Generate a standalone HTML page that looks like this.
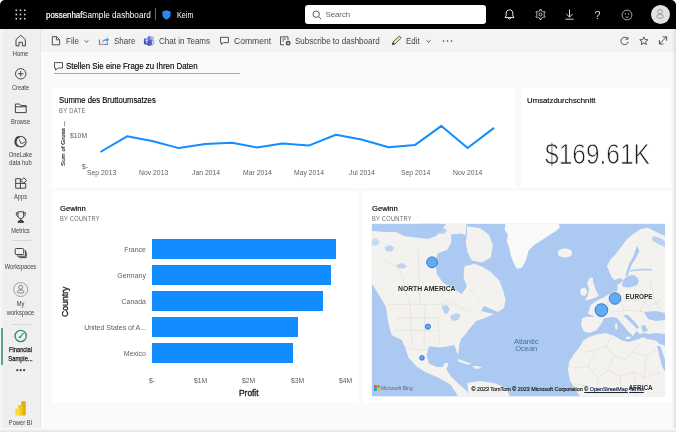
<!DOCTYPE html>
<html><head><meta charset="utf-8">
<style>
*{box-sizing:border-box;margin:0;padding:0}
html,body{width:676px;height:432px;overflow:hidden;background:#fff;font-family:"Liberation Sans",sans-serif;color:#252423}
#win{position:absolute;left:0;top:0;width:676px;height:432px;border-radius:5px 5px 0 0;overflow:hidden;background:#fafafa;will-change:transform}
#top{position:absolute;left:0;top:0;width:676px;height:29px;background:#000}
#nav{position:absolute;left:0;top:29px;width:41px;height:403px;background:linear-gradient(to right,#f8f8f8 0,#efefef 3.5px,#efefef 39.5px,#e3e3e3 41px)}
#navedge{position:absolute;left:41px;top:52px;width:2.5px;height:380px;background:#fdfdfd}
.abs{position:absolute}
.t{position:absolute;white-space:nowrap;line-height:1}
.card{position:absolute;background:#fff;box-shadow:0 0 2px rgba(0,0,0,0.025)}
.nl{position:absolute;width:41px;left:0;text-align:center;font-size:7px;color:#424242;line-height:8.5px;transform:scaleX(0.82);transform-origin:20.5px 0}
svg{position:absolute;overflow:visible}
.tb{position:absolute;font-size:9px;color:#424242;white-space:nowrap;line-height:1;transform:scaleX(0.89);transform-origin:0 0}
.ax{position:absolute;font-size:7.2px;color:#605e5c;white-space:nowrap;line-height:1;transform:scaleX(0.95);transform-origin:0 0}
.bl{position:absolute;font-size:7px;color:#605e5c;white-space:nowrap;line-height:1;right:530px;text-align:right}
</style></head><body>
<div id="win">
 <!-- TOP BAR -->
 <div id="top">
  <svg style="left:15px;top:9px" width="11" height="11" viewBox="0 0 11 11">
   <g fill="#ddd"><rect x="0.5" y="0.5" width="1.6" height="1.6"/><rect x="4.7" y="0.5" width="1.6" height="1.6"/><rect x="8.9" y="0.5" width="1.6" height="1.6"/>
   <rect x="0.5" y="4.7" width="1.6" height="1.6"/><rect x="4.7" y="4.7" width="1.6" height="1.6"/><rect x="8.9" y="4.7" width="1.6" height="1.6"/>
   <rect x="0.5" y="8.9" width="1.6" height="1.6"/><rect x="4.7" y="8.9" width="1.6" height="1.6"/><rect x="8.9" y="8.9" width="1.6" height="1.6"/></g>
  </svg>
  <div class="t" style="left:46px;top:10.6px;font-size:8.4px;color:#fff;-webkit-text-stroke:0.2px #fff;transform:scaleX(0.94);transform-origin:0 0">possenhaf</div>
  <div class="t" style="left:81.5px;top:10.5px;font-size:9px;color:#fff;transform:scaleX(0.91);transform-origin:0 0">Sample dashboard</div>
  <div class="abs" style="left:155.2px;top:8.3px;width:1px;height:11.5px;background:#6a6a6a"></div>
  <svg style="left:162px;top:10px" width="9" height="10" viewBox="0 0 9 10"><path d="M4.5 0.3 L8.6 1.6 L8.6 4.6 C8.6 7.2 6.8 8.9 4.5 9.7 C2.2 8.9 0.4 7.2 0.4 4.6 L0.4 1.6 Z" fill="#2b88f0"/></svg>
  <div class="t" style="left:176.7px;top:11px;font-size:8.3px;color:#fff;transform:scaleX(0.87);transform-origin:0 0">Keim</div>
  <div class="abs" style="left:305px;top:5px;width:181px;height:19px;background:#fff;border-radius:3px"></div>
  <svg style="left:312px;top:10px" width="10" height="10" viewBox="0 0 10 10"><circle cx="4.2" cy="4.2" r="3.2" fill="none" stroke="#555" stroke-width="1"/><path d="M6.6 6.6 L9.2 9.2" stroke="#555" stroke-width="1"/></svg>
  <div class="t" style="left:325.5px;top:10.5px;font-size:7.8px;color:#616161">Search</div>
  <!-- bell -->
  <svg style="left:504px;top:9px" width="11" height="11" viewBox="0 0 11 11"><path d="M5.5 0.8 C3.4 0.8 2.2 2.4 2.2 4.3 L2.2 6.8 L1 8.6 L10 8.6 L8.8 6.8 L8.8 4.3 C8.8 2.4 7.6 0.8 5.5 0.8 Z" fill="none" stroke="#eee" stroke-width="1"/><path d="M4.2 9.4 Q5.5 10.8 6.8 9.4" fill="none" stroke="#eee" stroke-width="1"/></svg>
  <!-- gear -->
  <svg style="left:535px;top:9px" width="11" height="11" viewBox="0 0 11 11"><path d="M3.65 2.30 L4.66 1.90 L4.87 0.54 L6.13 0.54 L6.34 1.90 L7.35 2.30 L8.20 2.97 L9.48 2.48 L10.11 3.56 L9.04 4.43 L9.20 5.50 L9.04 6.57 L10.11 7.44 L9.48 8.52 L8.20 8.03 L7.35 8.70 L6.34 9.10 L6.13 10.46 L4.87 10.46 L4.66 9.10 L3.65 8.70 L2.80 8.03 L1.52 8.52 L0.89 7.44 L1.96 6.57 L1.80 5.50 L1.96 4.43 L0.89 3.56 L1.52 2.48 L2.80 2.97 Z" fill="none" stroke="#e6e6e6" stroke-width="0.85" stroke-linejoin="round"/><circle cx="5.5" cy="5.5" r="1.5" fill="none" stroke="#e6e6e6" stroke-width="0.85"/></svg>
  <!-- download -->
  <svg style="left:564px;top:9px" width="11" height="11" viewBox="0 0 11 11"><path d="M5.5 0.5 L5.5 8 M2.4 5 L5.5 8.1 L8.6 5 M1.5 10.2 L9.5 10.2" fill="none" stroke="#eee" stroke-width="0.9"/></svg>
  <div class="t" style="left:594.5px;top:10px;font-size:10.7px;color:#ddd">?</div>
  <!-- smiley -->
  <svg style="left:621px;top:8.5px" width="12" height="12" viewBox="0 0 12 12"><circle cx="6" cy="6" r="4.9" fill="none" stroke="#ddd" stroke-width="0.75"/><circle cx="4.4" cy="4.9" r="0.6" fill="#ddd"/><circle cx="7.6" cy="4.9" r="0.6" fill="#ddd"/><path d="M4.5 7.9 Q6 8.7 7.5 7.9" fill="none" stroke="#ddd" stroke-width="0.75"/></svg>
  <!-- avatar -->
  <div class="abs" style="left:650.5px;top:4.5px;width:19px;height:19px;border-radius:50%;background:#e1e1e1"></div>
  <svg style="left:654px;top:8px" width="12" height="12" viewBox="0 0 12 12"><circle cx="6" cy="3.7" r="2.3" fill="none" stroke="#8a8a8a" stroke-width="0.75"/><ellipse cx="6" cy="8.4" rx="3.4" ry="1.9" fill="none" stroke="#8a8a8a" stroke-width="0.75"/></svg>
 </div>

 <!-- NAV -->
 <div id="nav"></div>
 <div id="navedge"></div>
 <svg style="left:0;top:0" width="43" height="432" viewBox="0 0 43 432">
  <g fill="none" stroke="#424242" stroke-width="1" stroke-linejoin="round">
   <!-- home -->
   <path d="M16 45.8 V39.6 L20.7 35.3 L25.4 39.6 V45.8 H22.4 V42.3 H19 V45.8 Z"/>
   <!-- create -->
   <circle cx="20.7" cy="73.8" r="5.2"/><path d="M20.7 71 V76.6 M17.9 73.8 H23.5"/>
   <!-- browse -->
   <path d="M15.4 104 H19.6 L20.9 105.6 H26.2 V112.6 H15.4 Z M15.4 106.8 H26.2"/>
   <!-- onelake -->
   <circle cx="20.9" cy="141.7" r="5.2" stroke-width="1.1"/>
   <path d="M19.6 136.8 A5 5 0 0 0 18.2 146.2" stroke-width="2"/><path d="M19.3 139.4 L20.8 143.3 Q23 143.6 25.2 141.8" stroke-width="0.9"/>
   <!-- apps -->
   <path d="M15.7 178.7 H20.4 V183.4 H25.7 V188.2 H15.7 Z M15.7 183.4 H20.4 V188.2"/>
   <path d="M23.7 177.7 L26.5 180.5 L23.7 183.3 L20.9 180.5 Z"/>
   <!-- metrics trophy -->
   <path d="M18 211.8 H23.6 V215.8 C23.6 217.6 22.4 218.6 20.8 218.6 C19.2 218.6 18 217.6 18 215.8 Z M18 212.8 H16.3 C16.1 215 17 216.4 18.3 216.7 M23.6 212.8 H25.3 C25.5 215 24.6 216.4 23.3 216.7 M20.8 218.6 V220.4"/><path d="M18 222.4 C18 221 19 220.3 20.8 220.3 C22.6 220.3 23.6 221 23.6 222.4 Z" fill="#424242"/>
   <!-- workspaces -->
   <rect x="15.2" y="248.5" width="8.5" height="6" rx="1"/><path d="M24.7 250.4 H25.6 V256.2 H17.4 V255.4 M26.2 252.2 V257.6 H19 "/>
   <!-- my workspace -->
   <circle cx="20.7" cy="289.5" r="7" stroke="#8a8a8a" stroke-width="0.8"/>
   <circle cx="20.7" cy="287.2" r="2" stroke="#666" stroke-width="0.8"/><path d="M17.6 292.6 C17.3 290.6 18.6 290 20.7 290 C22.8 290 24.1 290.6 23.8 292.6 C22.8 293.3 18.6 293.3 17.6 292.6 Z" stroke="#666" stroke-width="0.8"/>
   <!-- financial -->
   <circle cx="20.7" cy="336" r="5.6" stroke="#2f8f72" stroke-width="1.4"/>
   <path d="M19.6 337.6 L23.5 333.2" stroke="#2f8f72" stroke-width="1.2"/>
   <circle cx="19.8" cy="337.3" r="1" fill="#2f8f72" stroke="none"/>
  </g>
  <!-- power bi logo -->
  <rect x="21.2" y="401.3" width="4.6" height="14.2" rx="0.8" fill="#e6ad10"/>
  <rect x="18.2" y="405" width="4.6" height="10.5" rx="0.8" fill="#f2c811"/>
  <rect x="15.3" y="408.6" width="4.6" height="6.9" rx="0.8" fill="#f7d84a"/>
 </svg>
 <div class="nl" style="top:49.5px">Home</div>
 <div class="nl" style="top:84px">Create</div>
 <div class="nl" style="top:117.5px">Browse</div>
 <div class="nl" style="top:150.5px">OneLake<br>data hub</div>
 <div class="nl" style="top:193px">Apps</div>
 <div class="nl" style="top:226.5px">Metrics</div>
 <div class="abs" style="left:12px;top:240px;width:19px;height:1px;background:#d6d6d6"></div>
 <div class="nl" style="top:263px">Workspaces</div>
 <div class="nl" style="top:300px">My<br>workspace</div>
 <div class="abs" style="left:12px;top:324px;width:19px;height:1px;background:#d6d6d6"></div>
 <div class="abs" style="left:1px;top:328px;width:2px;height:37px;background:#5aa58c"></div>
 <div class="nl" style="top:346px;color:#1b1a19;-webkit-text-stroke:0.25px #1b1a19">Financial<br>Sample...</div>
 <svg style="left:0;top:0" width="43" height="432" viewBox="0 0 43 432"><g fill="#444"><circle cx="17.3" cy="370.2" r="1.15"/><circle cx="20.7" cy="370.2" r="1.15"/><circle cx="24.1" cy="370.2" r="1.15"/></g></svg>
 <div class="nl" style="top:419px">Power BI</div>

 <!-- TOOLBAR -->
 <div class="abs" style="left:41px;top:29px;width:635px;height:23px;background:#f3f3f3"></div>
 <svg style="left:0;top:0" width="676" height="60" viewBox="0 0 676 60">
  <g fill="none" stroke="#424242" stroke-width="0.9" stroke-linejoin="round">
   <path d="M52.3 36.6 H56.6 L59.6 39.6 V44.8 H52.3 Z M56.4 36.6 V39.8 H59.6"/>
   <path d="M84.6 40.4 L86.5 42.2 L88.4 40.4"/>
   <path d="M220.5 37.3 H228.4 V42.6 H223.6 L221.6 44.6 V42.6 H220.5 Z"/>
   <path d="M280.5 36.8 H288 V40 M280.5 36.8 V44.8 H284 M282.3 39 H286 M282.3 41 H284"/>
   <path d="M426.6 40.4 L428.6 42.2 L430.6 40.4"/>
   <path d="M627.6 38.8 A3.7 3.7 0 1 0 628.2 41.8 M627.9 36.9 V39.2 H625.6"/>
   <path d="M643.8 36.9 L645 39.6 L647.9 39.8 L645.7 41.7 L646.4 44.5 L643.8 43 L641.2 44.5 L641.9 41.7 L639.7 39.8 L642.6 39.6 Z"/>
   <path d="M659.4 44 L666.6 36.8 M662.6 36.8 H666.6 V40.8 M659.4 40 V44 H663.4"/>
  </g>
  <circle cx="288.2" cy="43.2" r="2.4" fill="#424242"/><path d="M288.2 41.9 V44.5 M286.9 43.2 H289.5" stroke="#fff" stroke-width="0.7"/>
  <g fill="#424242"><circle cx="443.5" cy="41" r="0.8"/><circle cx="447.5" cy="41" r="0.8"/><circle cx="451.5" cy="41" r="0.8"/></g>
  <!-- share icon -->
  <path d="M99.4 39.5 V44.4 H107.5 V42.5" fill="none" stroke="#3a78c9" stroke-width="1"/>
  <path d="M101.8 43 C102.2 40.2 104 38.9 106.6 38.9 V37 L109.2 39.8 L106.6 42.6 V40.7 C104.8 40.7 103 41.3 101.8 43 Z" fill="#5b9be0"/>
  <rect x="99.5" y="44.2" width="5" height="0.9" fill="#e8a07a"/>
  <!-- teams -->
  <circle cx="152.2" cy="38" r="1.3" fill="none" stroke="#7b83eb" stroke-width="0.8"/>
  <path d="M150.6 40.3 H153.8 V43 C153.8 44.3 152.8 45 151.8 45" fill="none" stroke="#7b83eb" stroke-width="0.8"/>
  <circle cx="149.2" cy="37.4" r="1.7" fill="#7b83eb"/>
  <path d="M146.4 39.6 H152.2 V43.2 C152.2 45 150.9 46 149.3 46 C147.7 46 146.4 45 146.4 43.2 Z" fill="#5b63d3"/>
  <rect x="143.9" y="38.6" width="5.8" height="5.8" rx="0.6" fill="#4b53bc"/>
  <path d="M145.1 40 H148.5 M146.8 40 V43.4" stroke="#fff" stroke-width="0.9"/>
  <!-- pencil -->
  <path d="M392.2 44.8 L393 42 L399.3 35.9 L401.3 37.9 L395 44 Z" fill="#dfe49a" stroke="#4a4a3a" stroke-width="0.8" stroke-linejoin="round"/>
  <path d="M392.2 44.8 L393 42 L395 44 Z" fill="#444"/>
 </svg>
 <div class="tb" style="left:65.5px;top:37.3px">File</div>
 <div class="tb" style="left:114px;top:37.3px">Share</div>
 <div class="tb" style="left:158.5px;top:37.3px">Chat in Teams</div>
 <div class="tb" style="left:233.5px;top:37.3px;transform:scaleX(0.95)">Comment</div>
 <div class="tb" style="left:295px;top:37.3px">Subscribe to dashboard</div>
 <div class="tb" style="left:406px;top:37.3px">Edit</div>

 <!-- Q&A -->
 <svg style="left:0;top:0" width="80" height="80" viewBox="0 0 80 80"><path d="M54.5 62.6 H62.5 V68 H58 L55.6 70.2 V68 H54.5 Z" fill="none" stroke="#444" stroke-width="0.9" stroke-linejoin="round"/></svg>
 <div class="t" style="left:66px;top:62px;font-size:8.7px;color:#000;transform:scaleX(0.908);transform-origin:0 0;-webkit-text-stroke:0.15px #000">Stellen Sie eine Frage zu Ihren Daten</div>
 <div class="abs" style="left:54px;top:73px;width:186px;height:1px;background:#aaa"></div>

 <!-- CARD 1 -->
 <div class="card" style="left:52px;top:88px;width:463px;height:100px"></div>
 <div class="t" style="left:59px;top:96px;font-size:8.5px;color:#000;transform:scaleX(0.906);transform-origin:0 0;-webkit-text-stroke:0.15px #000">Summe des Bruttoumsatzes</div>
 <div class="t" style="left:59px;top:108px;font-size:6.8px;color:#6b6b6b;letter-spacing:0.3px;transform:scaleX(0.87);transform-origin:0 0">BY DATE</div>
 <div class="t" style="left:59.8px;top:165.5px;font-size:6.2px;color:#252423;transform:rotate(-90deg);transform-origin:0 0;-webkit-text-stroke:0.15px #252423">Sum of Gross ...</div>
 <div class="ax" style="left:70px;top:132.3px">$10M</div>
 <div class="ax" style="left:82px;top:162.5px">$-</div>
 <svg style="left:0;top:0" width="520" height="190" viewBox="0 0 520 190">
  <polyline points="100.4,152 127,136.3 152.1,141 178.8,148.1 205.4,144 232,142.8 257.2,147.5 282.3,143.4 308.7,145.6 335.9,134.7 361.4,139.5 388.6,147.3 415.2,144.9 441.4,125.9 467.6,148 494,127.9" fill="none" stroke="#118dff" stroke-width="2" stroke-linejoin="round"/>
 </svg>
 <div class="ax" style="left:87px;top:169px">Sep 2013</div>
 <div class="ax" style="left:139px;top:169px">Nov 2013</div>
 <div class="ax" style="left:192px;top:169px">Jan 2014</div>
 <div class="ax" style="left:242.5px;top:169px">Mar 2014</div>
 <div class="ax" style="left:294px;top:169px">May 2014</div>
 <div class="ax" style="left:348.5px;top:169px">Jul 2014</div>
 <div class="ax" style="left:400.5px;top:169px">Sep 2014</div>
 <div class="ax" style="left:452.5px;top:169px">Nov 2014</div>

 <!-- CARD 2 -->
 <div class="card" style="left:521px;top:88px;width:150px;height:100px"></div>
 <div class="t" style="left:527px;top:96.5px;font-size:7.8px;color:#000;-webkit-text-stroke:0.12px #000">Umsatzdurchschnitt</div>
 <div class="t" style="left:545px;top:139.8px;font-size:29px;color:#222;transform:scaleX(0.845);transform-origin:0 0;-webkit-text-stroke:0.75px #fff">$169.61K</div>

 <!-- CARD 3 -->
 <div class="card" style="left:52px;top:191px;width:306px;height:212px"></div>
 <div class="t" style="left:60px;top:205px;font-size:7.6px;color:#000;-webkit-text-stroke:0.15px #000">Gewinn</div>
 <div class="t" style="left:59.5px;top:216px;font-size:6.8px;color:#6b6b6b;letter-spacing:0.3px;transform:scaleX(0.84);transform-origin:0 0">BY COUNTRY</div>
 <div class="t" style="left:61px;top:317px;font-size:8.7px;color:#252423;transform:rotate(-90deg);transform-origin:0 0;-webkit-text-stroke:0.35px #252423">Country</div>
 <div class="abs" style="left:152px;top:239px;width:184px;height:19.5px;background:#118dff"></div>
 <div class="abs" style="left:152px;top:265.2px;width:179px;height:19.5px;background:#118dff"></div>
 <div class="abs" style="left:152px;top:291.3px;width:171.3px;height:19.5px;background:#118dff"></div>
 <div class="abs" style="left:152px;top:317.4px;width:145.5px;height:19.5px;background:#118dff"></div>
 <div class="abs" style="left:152px;top:343.4px;width:141.3px;height:19.5px;background:#118dff"></div>
 <div class="bl" style="top:246px">France</div>
 <div class="bl" style="top:272px">Germany</div>
 <div class="bl" style="top:298px">Canada</div>
 <div class="bl" style="top:323.8px">United States of A...</div>
 <div class="bl" style="top:350px">Mexico</div>
 <div class="ax" style="left:148.7px;top:377px">$-</div>
 <div class="ax" style="left:194px;top:377px">$1M</div>
 <div class="ax" style="left:242px;top:377px">$2M</div>
 <div class="ax" style="left:291px;top:377px">$3M</div>
 <div class="ax" style="left:339px;top:377px">$4M</div>
 <div class="t" style="left:239px;top:388.5px;font-size:8.4px;color:#252423;-webkit-text-stroke:0.35px #252423">Profit</div>

 <!-- CARD 4 -->
 <div class="card" style="left:363px;top:191px;width:309px;height:212px"></div>
 <div class="t" style="left:372px;top:205px;font-size:7.6px;color:#000;-webkit-text-stroke:0.15px #000">Gewinn</div>
 <div class="t" style="left:371.5px;top:216px;font-size:6.8px;color:#6b6b6b;letter-spacing:0.3px;transform:scaleX(0.84);transform-origin:0 0">BY COUNTRY</div>
 <!--MAP--><svg style="left:0;top:0" width="676" height="432" viewBox="0 0 676 432"><defs><clipPath id="mc"><rect x="371.6" y="223.6" width="293.6" height="173"/></clipPath></defs><g clip-path="url(#mc)"><rect x="371.6" y="223.6" width="293.6" height="173.00000000000003" fill="#abc9f1"/><polygon points="371.6,231.0 385.0,232.0 396.0,232.0 404.0,236.0 420.0,238.0 428.0,239.0 436.0,236.0 442.0,230.0 446.0,223.4 466.0,223.4 466.0,232.0 463.0,245.0 466.0,258.0 474.2,263.7 482.5,266.8 490.8,272.0 499.2,280.3 503.3,290.8 505.5,300.0 504.0,308.0 498.0,312.0 491.0,309.0 484.0,306.0 481.0,311.0 494.0,314.0 485.0,318.0 476.0,321.0 469.0,329.4 465.0,335.0 461.0,339.0 459.5,344.0 458.8,350.0 457.5,355.0 455.5,348.0 454.0,345.1 448.7,346.3 439.4,347.5 429.0,346.3 426.7,355.5 429.0,363.7 437.1,367.1 442.9,367.1 445.2,362.5 448.7,363.7 446.4,369.4 451.0,376.4 458.0,383.3 467.2,391.4 470.0,396.6 458.0,396.6 451.0,385.0 439.0,378.0 425.0,372.0 416.0,366.0 408.0,357.0 405.0,347.0 399.0,339.0 391.6,335.0 388.8,325.0 387.4,316.7 386.0,307.0 381.9,300.0 377.7,293.0 373.5,286.0 371.6,284.0" fill="#f3f2ee" /><polygon points="420.0,223.6 440.0,223.6 438.0,228.0 430.0,229.0 424.0,227.0" fill="#abc9f1" /><polygon points="433.0,229.0 442.0,227.0 447.0,230.0 444.0,234.0 436.0,233.0" fill="#abc9f1" opacity="0.85"/><polygon points="371.6,240.0 376.0,238.0 380.0,242.0 376.0,246.0 371.6,245.0" fill="#abc9f1" opacity="0.6"/><polygon points="435.6,261.6 437.7,253.2 447.1,250.1 451.2,242.8 451.2,234.5 461.7,233.5 466.0,236.0 466.0,250.0 468.0,256.0 474.2,263.7 470.0,265.0 464.8,266.0 463.8,270.0 463.8,278.2 466.9,286.6 461.7,293.9 453.3,288.7 442.9,282.4 436.7,274.0" fill="#abc9f1" /><polygon points="466.9,226.2 480.4,228.2 488.8,234.5 492.9,244.9 490.8,257.4 482.5,262.6 472.0,260.5 467.9,253.2 465.8,242.8 466.9,234.5" fill="#f3f2ee" /><polygon points="455.0,223.6 466.0,223.6 466.9,226.2 462.0,228.0 456.0,227.0" fill="#f3f2ee" /><polygon points="441.5,306.0 447.0,305.0 450.0,309.0 447.0,314.0 444.0,313.0" fill="#abc9f1" opacity="0.8"/><polygon points="450.0,316.0 456.0,313.0 461.0,315.0 458.0,320.0 452.0,321.0" fill="#abc9f1" opacity="0.8"/><polygon points="384.7,247.0 390.0,245.0 394.4,248.0 391.0,252.0 386.0,251.0" fill="#abc9f1" opacity="0.75"/><polygon points="396.0,265.0 402.0,263.0 407.0,266.0 404.0,268.6 398.0,268.0" fill="#abc9f1" opacity="0.75"/><polygon points="402.0,340.0 405.0,348.0 408.0,356.0 406.0,357.0 401.0,349.0 397.5,338.0" fill="#abc9f1" /><polygon points="458.0,359.0 471.9,363.7 467.2,364.8 458.0,361.3" fill="#f3f2ee" /><polygon points="472.0,366.0 478.0,366.0 482.0,368.0 476.0,369.0" fill="#f3f2ee" /><polygon points="467.0,383.0 480.0,381.0 494.0,383.0 506.0,388.0 510.0,396.6 469.0,396.6" fill="#f3f2ee" /><polygon points="505.4,223.3 504.7,229.8 508.0,235.0 506.7,241.5 509.3,248.0 510.6,254.4 513.2,262.2 517.0,268.7 522.2,267.4 526.1,259.6 528.7,250.5 533.9,245.3 541.7,240.2 549.5,235.0 556.0,231.1 559.9,227.2 558.6,223.3" fill="#f9f9f8" /><ellipse cx="565" cy="253" rx="7.2" ry="4.6" fill="#f4f3ef"/><polygon points="607.0,266.3 610.6,259.2 615.8,254.0 621.1,246.9 626.4,239.8 633.5,233.7 640.5,229.3 647.5,227.5 654.6,231.0 661.6,234.6 665.2,236.0 665.2,334.0 656.0,333.0 650.0,334.0 644.0,333.0 640.0,334.0 636.0,331.0 633.0,336.0 628.0,331.0 622.0,324.0 617.0,318.0 612.0,317.0 604.0,318.2 601.0,324.0 596.7,330.0 589.3,333.0 584.0,331.6 581.1,325.6 581.9,318.2 586.3,316.7 595.2,316.7 587.8,313.8 590.7,304.9 598.0,300.0 606.0,296.0 613.0,292.0 617.6,291.0 617.6,282.0 614.0,280.3 610.6,275.0" fill="#f3f2ee" /><polygon points="653.0,236.0 660.0,238.0 665.2,241.0 665.2,247.0 658.0,244.0 652.0,240.0" fill="#abc9f1" opacity="0.8"/><polygon points="609.0,278.0 614.0,280.0 620.0,278.0 623.0,280.0 620.0,284.0 614.0,284.0 609.0,281.0" fill="#abc9f1" /><polygon points="637.0,246.0 639.5,251.0 636.0,258.0 632.0,264.0 629.5,270.0 627.5,276.0 625.5,276.0 627.0,270.0 629.5,263.0 633.0,257.0 635.5,250.0" fill="#abc9f1" /><polygon points="630.0,270.0 640.0,268.8 652.0,269.0 652.0,270.5 640.0,270.4 630.0,271.5" fill="#abc9f1" opacity="0.9"/><polygon points="624.0,279.0 628.0,276.0 633.0,275.0 637.0,277.0 639.0,281.0 637.0,285.0 632.0,287.0 626.0,287.5 622.0,286.0 622.5,282.0" fill="#abc9f1" /><polygon points="589.7,277.6 593.0,278.0 593.1,282.2 595.5,289.1 598.9,296.0 593.1,298.4 585.0,300.7 588.0,295.0 589.0,289.0 587.0,283.0" fill="#f3f2ee" /><polygon points="580.4,289.0 585.0,287.5 587.4,292.0 585.0,296.0 580.6,295.0" fill="#f3f2ee" /><polygon points="623.0,315.0 628.0,315.0 634.0,321.0 639.0,327.0 637.0,329.0 631.0,323.0" fill="#abc9f1" /><polygon points="641.0,326.0 645.0,325.0 648.0,331.0 643.0,332.0" fill="#abc9f1" /><polygon points="644.0,312.0 656.0,311.0 665.2,313.0 665.2,320.0 656.0,321.0 648.0,319.0" fill="#abc9f1" /><polygon points="615.0,324.0 617.0,323.0 617.5,329.0 615.5,330.0" fill="#f3f2ee" /><polygon points="626.0,337.0 631.0,336.5 630.0,339.0 626.0,339.0" fill="#f3f2ee" /><polygon points="640.0,338.0 646.0,337.5 645.0,339.5 640.0,339.5" fill="#f3f2ee" /><polygon points="583.3,340.4 587.8,337.5 596.7,334.5 605.6,333.0 614.4,336.0 621.9,340.4 629.3,341.9 638.1,339.0 647.0,339.0 656.0,340.4 658.9,343.4 665.2,346.0 665.2,396.6 580.0,396.6 576.0,390.0 570.0,381.0 568.0,370.0 569.0,362.0 574.0,354.0 578.9,347.9" fill="#f3f2ee" /><polygon points="657.0,346.0 660.0,346.0 665.2,360.0 665.2,372.0 662.0,366.0" fill="#abc9f1" /><g fill="none" stroke="#dedad2" stroke-width="0.55"><path d="M386 304.2 L446 304.2 L452 306 M405 347 L420 350 L432 349 M396 318 L440 318 M394 330 L436 331 M410 304 L412 346 M425 304 L424 348 M438 320 L440 345 M400 270 L410 304 M418 250 L420 304 M385 260 L400 270 M445 300 L470 312 M470 290 L480 300"/><path d="M586 352 L596 350 L606 346 L612 337 M606 346 L614 356 L626 360 L632 352 L640 345 M614 356 L608 370 L620 376 L634 372 L646 378 L660 372 M632 352 L646 356 L656 350 M646 356 L644 378 M596 350 L588 366 L598 378 L608 370 M588 366 L574 368 M598 378 L596 396 M620 376 L622 396 M634 372 L636 396 M575 384 L590 386"/><path d="M625 300 L640 300 L650 306 L662 300 M620 292 L624 312 M606 302 L612 312 L628 310 L645 312 M640 290 L645 300 L640 312 M650 280 L655 300 L660 312 M600 316 L604 318"/></g><g fill="#62a9f6" stroke="#2b6cc4" stroke-width="0.85"><circle cx="432" cy="262.3" r="5.4"/><circle cx="427.9" cy="326.6" r="2.6"/><circle cx="422" cy="357.9" r="2.3"/><circle cx="615" cy="298.5" r="5.8"/><circle cx="601.4" cy="310.1" r="6.4"/></g></g></svg><div class="t" style="left:398px;top:286px;font-size:6.8px;font-weight:bold;color:#2a2a2a;text-shadow:0 0 1.5px #fff,0 0 1.5px #fff">NORTH AMERICA</div><div class="t" style="left:625.6px;top:294.2px;font-size:6.4px;font-weight:bold;color:#2a2a2a;text-shadow:0 0 1.5px #fff,0 0 1.5px #fff">EUROPE</div><div class="t" style="left:628.5px;top:385px;font-size:6.4px;font-weight:bold;color:#2a2a2a;text-shadow:0 0 1.5px #fff,0 0 1.5px #fff">AFRICA</div><div class="t" style="left:513.7px;top:337.5px;font-size:7.5px;color:#4a6aa0;text-align:center;width:25px;line-height:7.3px">Atlantic<br>Ocean</div><div class="t" style="left:471.5px;top:387px;font-size:5.4px;color:#222;-webkit-text-stroke:0.2px #222">© 2023 TomTom  © 2023 Microsoft Corporation  <span style="color:#2a55b5;text-decoration:underline">© OpenStreetMap</span>  <span style="color:#2a55b5;text-decoration:underline">Terms</span></div><svg style="left:374px;top:385px" width="6" height="6" viewBox="0 0 6 6"><rect x="0" y="0" width="2.8" height="2.8" fill="#f25022"/><rect x="3.1" y="0" width="2.8" height="2.8" fill="#7fba00"/><rect x="0" y="3.1" width="2.8" height="2.8" fill="#00a4ef"/><rect x="3.1" y="3.1" width="2.8" height="2.8" fill="#ffb900"/></svg><div class="t" style="left:381px;top:386px;font-size:5px;color:#666">Microsoft Bing</div><!--/MAP-->
<div class="abs" style="left:672px;top:29px;width:4px;height:403px;background:linear-gradient(to right,rgba(255,255,255,0),#dcdde0)"></div>
 <div class="abs" style="left:0;top:428px;width:676px;height:4px;background:linear-gradient(to bottom,#fff,#e2e2e2)"></div>
</div>
</body></html>
